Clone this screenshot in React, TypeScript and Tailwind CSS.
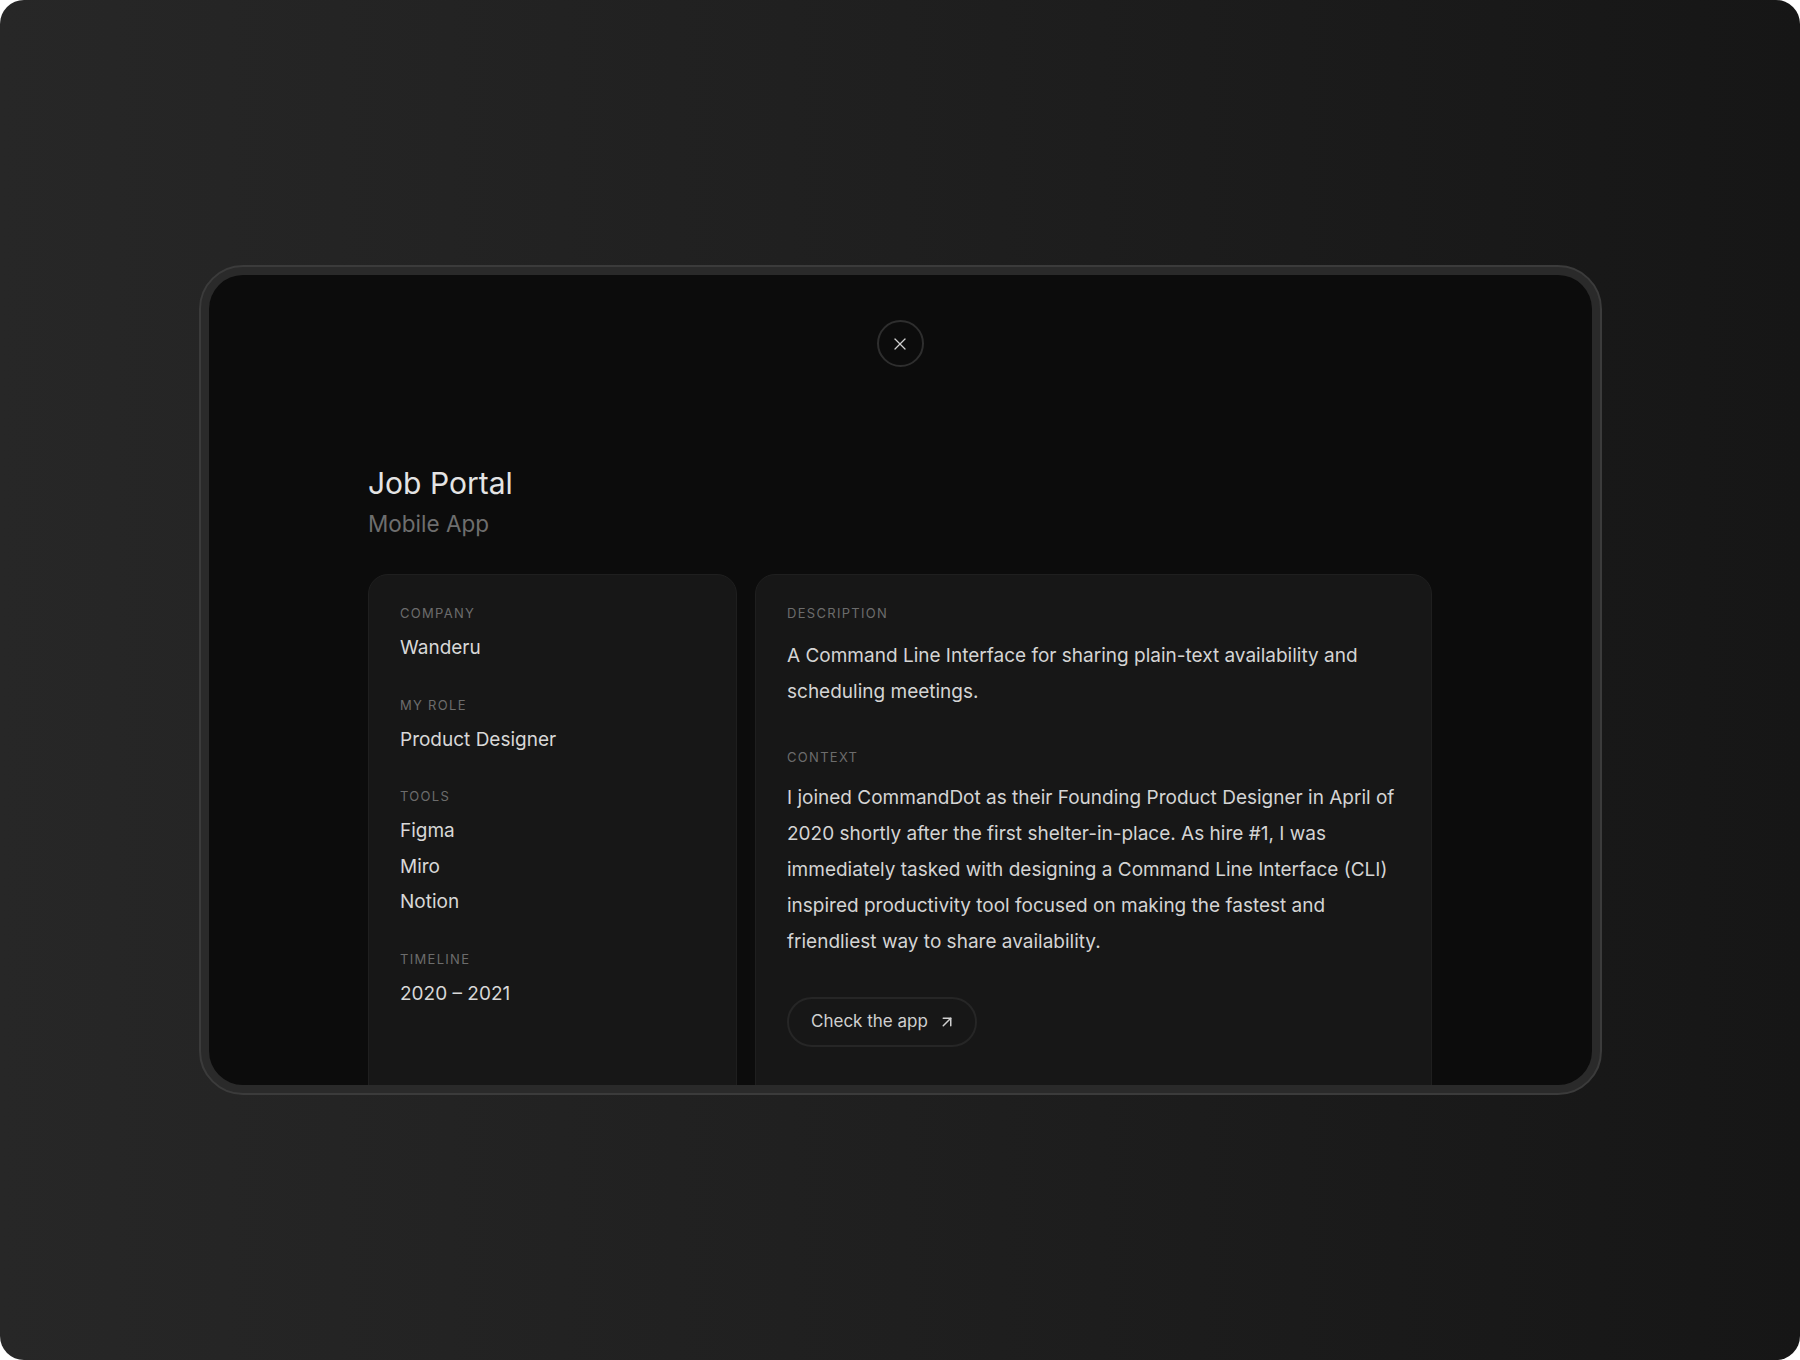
import React from "react";
import { ArrowUpRight, X } from "lucide-react";

const font = { fontFamily: "Inter, 'Noto Sans', sans-serif" };

const Label: React.FC<{ children: React.ReactNode }> = ({ children }) => (
	<div className="text-[13px] leading-[20px] uppercase tracking-[0.1em] text-[#6c6c6c]">
		{children}
	</div>
);

const Field: React.FC<{ label: string; values: string[] }> = ({ label, values }) => (
	<div>
		<Label>{label}</Label>
		<div className="mt-[7px]">
			{values.map((v) => (
				<div key={v} className="text-[19px] leading-[35.5px] text-[#d8d8d8]">
					{v}
				</div>
			))}
		</div>
	</div>
);

export default function App() {
	return (
		<div className="bg-white" style={font}>
			<div className="h-[1360px] w-full rounded-[24px] bg-gradient-to-r from-[#272727] via-[#1f1f1f] to-[#161616] flex items-center justify-center">
				{/* device frame */}
				<div className="w-[1403px] h-[830px] rounded-[44px] border-2 border-[#3b3b3b] bg-[#2a2a2a] p-[8px]">
					<div className="h-full w-full rounded-[34px] bg-[#0c0c0c] overflow-hidden flex flex-col items-center pt-[45px]">
						<button className="shrink-0 w-[47px] h-[47px] rounded-full border-2 border-[#2e2e2e] flex items-center justify-center text-[#d0d0d0]">
							<X size={20} strokeWidth={1.5} />
						</button>

						<div className="shrink-0 w-[1064px] mt-[96px]">
							<h1 className="text-[30px] leading-[40px] text-[#e4e4e4] font-normal">
								Job Portal
							</h1>
							<div className="mt-[5px] text-[22.5px] leading-[32px] text-[#6e6e6e]">
								Mobile App
							</div>

							<div className="mt-[34px] grid grid-cols-[369px_677px] gap-[18px]">
								{/* left card */}
								<div className="h-[560px] rounded-t-[20px] bg-[#171717] border border-[#1f1f1f] px-[31px] pt-[28px] flex flex-col gap-[29px]">
									<Field label="Company" values={["Wanderu"]} />
									<Field label="My Role" values={["Product Designer"]} />
									<Field label="Tools" values={["Figma", "Miro", "Notion"]} />
									<Field label="Timeline" values={["2020 – 2021"]} />
								</div>

								{/* right card */}
								<div className="h-[560px] rounded-t-[20px] bg-[#171717] border border-[#1f1f1f] px-[31px] pt-[28px]">
									<Label>Description</Label>
									<p className="mt-[15px] text-[19px] leading-[36px] text-[#d4d4d4]">
										A Command Line Interface for sharing plain-text availability and scheduling meetings.
									</p>
									<div className="mt-[37px]">
										<Label>Context</Label>
									</div>
									<p className="mt-[13px] text-[19px] leading-[36px] text-[#d4d4d4]">
										I joined CommandDot as their Founding Product Designer in April of 2020 shortly after the first shelter-in-place. As hire #1, I was immediately tasked with designing a Command Line Interface (CLI) inspired productivity tool focused on making the fastest and friendliest way to share availability.
									</p>
									<button className="mt-[37px] h-[50px] w-[190px] rounded-full border-2 border-[#262626] flex items-center pl-[22px] gap-[10px] text-[17px] text-[#d0d0d0]">
										<span>Check the app</span>
										<ArrowUpRight size={18} strokeWidth={2} />
									</button>
								</div>
							</div>
						</div>
					</div>
				</div>
			</div>
		</div>
	);
}
